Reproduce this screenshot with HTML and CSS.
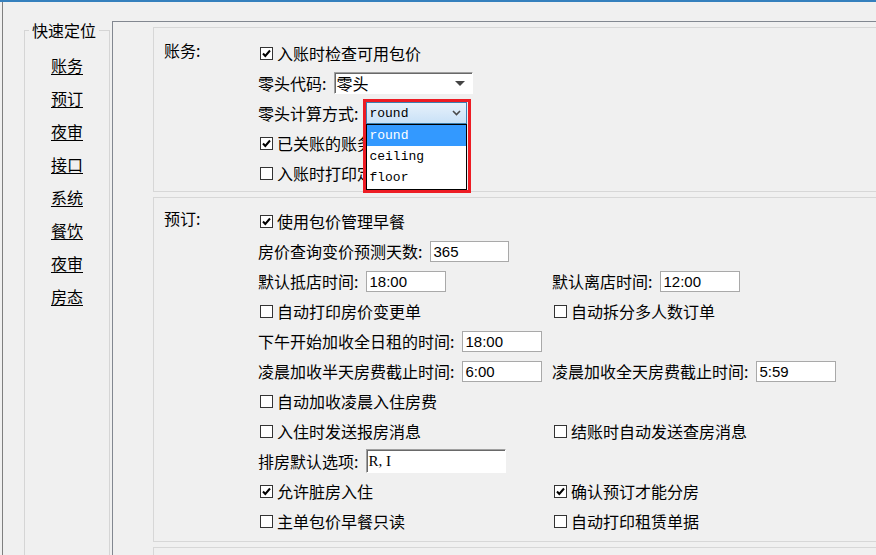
FILE: index.html
```html
<!DOCTYPE html>
<html lang="zh-CN">

<head>
    <meta charset="UTF-8">
    <meta name="viewport" content="width=device-width, initial-scale=1.0">
    <title>参数设置</title>
    <link rel="stylesheet" href="styles.css">
</head>

<body>
    <div class="window">
        <div class="frame">
            <fieldset class="nav">
                <legend>快速定位</legend>
                <a href="#">账务</a>
                <a href="#">预订</a>
                <a href="#">夜审</a>
                <a href="#">接口</a>
                <a href="#">系统</a>
                <a href="#">餐饮</a>
                <a href="#">夜审</a>
                <a href="#">房态</a>
            </fieldset>

            <div class="panel">
                <!-- 账务 -->
                <div class="section first">
                    <div class="section-title">账务:</div>
                    <div class="rows">
                        <div class="row">
                            <label class="check"><span class="box"><svg viewBox="0 0 11 11"><polyline points="2,5.5 4.3,8 9,2.5" /></svg></span>入账时检查可用包价</label>
                        </div>
                        <div class="row">
                            <span>零头代码:</span>
                            <span class="combo">零头<span class="arrow"></span></span>
                        </div>
                        <div class="row">
                            <span>零头计算方式:</span>
                            <div class="combo-wrap">
                                <span class="combo-open">round
                                    <svg class="chevron" viewBox="0 0 9 6"><polyline points="1,1 4.5,4.5 8,1" /></svg>
                                </span>
                                <ul class="droplist">
                                    <li class="selected">round</li>
                                    <li>ceiling</li>
                                    <li>floor</li>
                                </ul>
                                <div class="mark"></div>
                            </div>
                        </div>
                        <div class="row">
                            <label class="check"><span class="box"><svg viewBox="0 0 11 11"><polyline points="2,5.5 4.3,8 9,2.5" /></svg></span>已关账的账务</label>
                        </div>
                        <div class="row">
                            <label class="check"><span class="box"></span>入账时打印定</label>
                        </div>
                    </div>
                </div>

                <!-- 预订 -->
                <div class="section second">
                    <div class="section-title">预订:</div>
                    <div class="rows">
                        <div class="row">
                            <label class="check"><span class="box"><svg viewBox="0 0 11 11"><polyline points="2,5.5 4.3,8 9,2.5" /></svg></span>使用包价管理早餐</label>
                        </div>
                        <div class="row">
                            <span>房价查询变价预测天数:</span>
                            <input class="text short" type="text" value="365">
                        </div>
                        <div class="row">
                            <div class="cell">
                                <span>默认抵店时间:</span>
                                <input class="text" type="text" value="18:00">
                            </div>
                            <div class="cell">
                                <span>默认离店时间:</span>
                                <input class="text" type="text" value="12:00">
                            </div>
                        </div>
                        <div class="row">
                            <div class="cell">
                                <label class="check"><span class="box"></span>自动打印房价变更单</label>
                            </div>
                            <div class="cell">
                                <label class="check"><span class="box"></span>自动拆分多人数订单</label>
                            </div>
                        </div>
                        <div class="row">
                            <span>下午开始加收全日租的时间:</span>
                            <input class="text" type="text" value="18:00">
                        </div>
                        <div class="row">
                            <div class="cell">
                                <span>凌晨加收半天房费截止时间:</span>
                                <input class="text" type="text" value="6:00">
                            </div>
                            <div class="cell">
                                <span>凌晨加收全天房费截止时间:</span>
                                <input class="text" type="text" value="5:59">
                            </div>
                        </div>
                        <div class="row">
                            <label class="check"><span class="box"></span>自动加收凌晨入住房费</label>
                        </div>
                        <div class="row">
                            <div class="cell">
                                <label class="check"><span class="box"></span>入住时发送报房消息</label>
                            </div>
                            <div class="cell">
                                <label class="check"><span class="box"></span>结账时自动发送查房消息</label>
                            </div>
                        </div>
                        <div class="row">
                            <span>排房默认选项:</span>
                            <input class="text sunken" type="text" value="R, I">
                        </div>
                        <div class="row">
                            <div class="cell">
                                <label class="check"><span class="box"><svg viewBox="0 0 11 11"><polyline points="2,5.5 4.3,8 9,2.5" /></svg></span>允许脏房入住</label>
                            </div>
                            <div class="cell">
                                <label class="check"><span class="box"><svg viewBox="0 0 11 11"><polyline points="2,5.5 4.3,8 9,2.5" /></svg></span>确认预订才能分房</label>
                            </div>
                        </div>
                        <div class="row">
                            <div class="cell">
                                <label class="check"><span class="box"></span>主单包价早餐只读</label>
                            </div>
                            <div class="cell">
                                <label class="check"><span class="box"></span>自动打印租赁单据</label>
                            </div>
                        </div>
                    </div>
                </div>

                <div class="section empty"></div>
            </div>
        </div>
    </div>
</body>

</html>
```

FILE: styles.css
```css
body {
    margin: 0;
    background: #f0f0f0;
    font-family: "Noto Sans CJK SC", sans-serif;
    font-size: 16px;
    color: #000;
}

.window {
    height: 100vh;
    overflow: hidden;
    border-top: 2px solid #3580bd;
    box-sizing: border-box;
}

.frame {
    display: flex;
    align-items: flex-start;
    margin-left: 2px;
    height: 100%;
    border-left: 1px solid #7f7f7f;
}

/* left navigation */

.nav {
    flex: none;
    box-sizing: border-box;
    width: 86px;
    height: 700px;
    min-width: 0;
    margin: 21px 0 0 21px;
    padding: 11px 0 0;
    border: 1px solid #d5d5d5;
}

.nav legend {
    margin-left: 4px;
    padding: 0 3px;
    line-height: 15px;
}

.nav a {
    display: block;
    text-align: center;
    line-height: 33px;
    color: #000;
    text-decoration: underline;
    text-underline-offset: 2px;
}

/* main panel */

.panel {
    flex: none;
    width: 900px;
    height: 700px;
    margin: 19px 0 0 2px;
    padding: 5px 0 0 40px;
    border-left: 1px solid #828790;
    border-top: 1px solid #828790;
}

.section {
    display: flex;
    margin-bottom: 5px;
    padding: 10px 0 3px 10px;
    border: 1px solid #d7d7d7;
    border-right: none;
}

.section.second {
    padding-top: 8px;
    padding-bottom: 5px;
}

.section.empty {
    height: 100px;
}

.section-title {
    flex: none;
    width: 94px;
    line-height: 24px;
}

.rows {
    display: flex;
    flex-direction: column;
}

.row {
    display: flex;
    align-items: center;
    height: 30px;
    white-space: nowrap;
}

.cell {
    display: flex;
    align-items: center;
    width: 294px;
}

/* checkbox */

.check {
    display: inline-flex;
    align-items: center;
}

.box {
    box-sizing: border-box;
    flex: none;
    display: inline-block;
    width: 13px;
    height: 13px;
    margin: 0 4px 0 2px;
    border: 1px solid #333;
    background: #fff;
}

.box svg {
    display: block;
    width: 11px;
    height: 11px;
}

.box polyline {
    fill: none;
    stroke: #000;
    stroke-width: 2;
}

/* text inputs */

.text {
    box-sizing: border-box;
    width: 80px;
    height: 21px;
    margin: 0 0 0 8px;
    padding: 0 2px;
    border: 1px solid #a9a9a9;
    background: #fff;
    font-family: "Liberation Sans", sans-serif;
    font-size: 15px;
    color: #000;
    outline: none;
}

.text.short {
    width: 79px;
}

.text.sunken {
    width: 140px;
    height: 24px;
    padding: 0 1px;
    border-color: #a0a0a0 #fff #fff #a0a0a0;
    box-shadow: inset 1px 1px 0 #696969;
    font-family: "Liberation Serif", serif;
}

/* combo boxes */

.combo {
    box-sizing: border-box;
    display: inline-flex;
    align-items: center;
    justify-content: space-between;
    width: 139px;
    height: 22px;
    margin-left: 8px;
    padding: 0 7px 0 1px;
    border: 1px solid;
    border-color: #a0a0a0 #fff #fff #a0a0a0;
    box-shadow: inset 1px 1px 0 #696969;
    background: #fff;
}

.arrow {
    width: 0;
    height: 0;
    border-left: 5px solid transparent;
    border-right: 5px solid transparent;
    border-top: 5px solid #444;
}

.combo-wrap {
    position: relative;
    margin-left: 8px;
}

.combo-open {
    box-sizing: border-box;
    display: flex;
    align-items: center;
    justify-content: space-between;
    width: 101px;
    height: 22px;
    padding: 0 5px 0 2px;
    border: 1px solid #3c7fb1;
    background: linear-gradient(#e6f1fb, #c9e1f7);
    font-family: "Liberation Mono", monospace;
    font-size: 13px;
}

.chevron {
    width: 9px;
    height: 6px;
}

.chevron polyline {
    fill: none;
    stroke: #4a4a4a;
    stroke-width: 1.6;
}

/* the open list lies over the rows below it */
.droplist {
    position: absolute;
    top: 22px;
    left: 0;
    z-index: 1;
    box-sizing: border-box;
    width: 101px;
    height: 66px;
    margin: 0;
    padding: 0;
    list-style: none;
    border: 1px solid #000;
    background: #fff;
    font-family: "Liberation Mono", monospace;
    font-size: 13px;
}

.droplist li {
    height: 21px;
    line-height: 21px;
    padding-left: 2px;
}

.droplist li.selected {
    background: #3399ff;
    color: #fff;
}

.mark {
    position: absolute;
    top: -3px;
    left: -3px;
    z-index: 2;
    box-sizing: border-box;
    width: 108px;
    height: 94px;
    border: 3px solid #ed1c24;
}
```
